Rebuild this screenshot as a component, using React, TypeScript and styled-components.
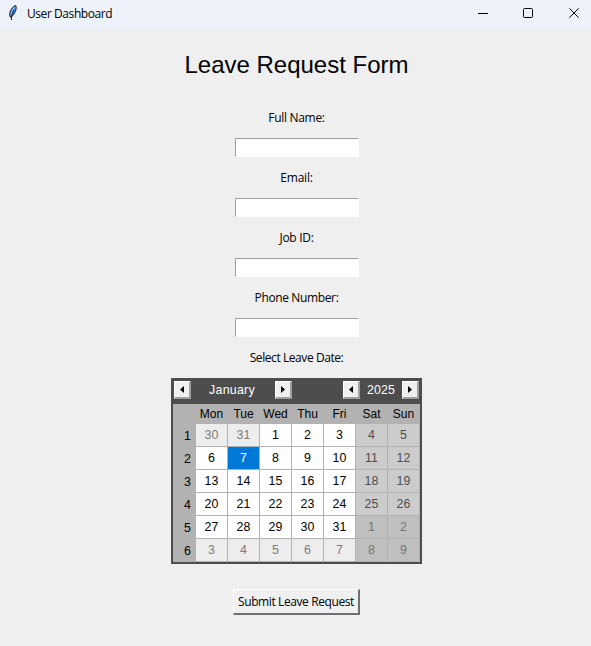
import React from "react";
import styled, { createGlobalStyle } from "styled-components";

const GlobalStyle = createGlobalStyle`
  * { box-sizing: border-box; }
  body { margin: 0; background: #efefef; overflow: hidden; }
`;

const UI_FONT = `"Open Sans", "Noto Sans", sans-serif`;
const CAL_FONT = `"Liberation Sans", Arial, sans-serif`;

const Window = styled.div`
  width: 591px;
  height: 646px;
  display: flex;
  flex-direction: column;
  background: #efefef;
  color: #000;
  font: 12px/16px ${UI_FONT};
`;

const TitleBar = styled.header`
  height: 29px;
  flex: none;
  display: flex;
  align-items: flex-start;
  background: #eef3fb;
`;

const AppIcon = styled.svg`
  width: 16px;
  height: 16px;
  margin: 5px 6px 0 5px;
`;

const WindowTitle = styled.span`
  flex: 1;
  padding-top: 6px;
  font-size: 12px;
  letter-spacing: -0.43px;
`;

const Controls = styled.div`
  display: flex;
  gap: 32px;
  padding: 7px 10px 0 0;
`;

const ControlIcon = styled.svg`
  width: 14px;
  height: 14px;
  fill: none;
  stroke: #000;
`;

const Body = styled.main`
  display: flex;
  flex-direction: column;
  align-items: center;
  padding-left: 2px;
`;

const Heading = styled.h1`
  margin: 18px 0 25px;
  font: 400 24px/36px ${CAL_FONT};
`;

const Field = styled.label`
  display: flex;
  flex-direction: column;
  align-items: center;
  height: 60px;
  padding-top: 2px;
`;

const Caption = styled.span<{ $tracking?: number }>`
  height: 28px;
  white-space: nowrap;
  letter-spacing: ${(p) => p.$tracking ?? -0.3}px;
`;

const Entry = styled.input`
  width: 124px;
  height: 19px;
  padding: 0 2px;
  border: 1px solid #fff;
  border-top-color: #a0a0a0;
  border-left-color: #a0a0a0;
  background: #fff;
  font: inherit;
  outline: none;
`;

const DateCaption = styled(Caption)`
  height: 30px;
  padding-top: 2px;
`;

const Calendar = styled.section`
  width: 251px;
  border: 2px solid #4d4d4d;
  border-top: 0;
  background: #4d4d4d;
  font-family: ${CAL_FONT};
`;

const CalendarHeader = styled.div`
  height: 26px;
  display: flex;
  align-items: center;
  justify-content: space-between;
  padding: 0 1px 2px;
  color: #fff;
  font-size: 12.4px;
  line-height: 15px;
  letter-spacing: 0.15px;
`;

const Stepper = styled.div<{ $width: number }>`
  width: ${(p) => p.$width}px;
  display: flex;
  align-items: center;
  justify-content: space-between;
`;

const MonthName = styled.span`
  padding-right: 2px;
  letter-spacing: 0.25px;
`;

const ArrowButton = styled.button`
  width: 17px;
  height: 18px;
  display: flex;
  align-items: center;
  justify-content: center;
  padding: 0;
  border: solid;
  border-width: 1px 2px 2px 1px;
  border-color: #fff #a0a0a0 #a0a0a0 #fff;
  background: #f0f0f0;
`;

const Grid = styled.div`
  display: grid;
  grid-template-columns: 23px repeat(7, 32px);
  grid-template-rows: 20px repeat(6, 23px);
  background: #b2b2b2;
  font-size: 12px;
`;

const Weekday = styled.span`
  padding-right: 1px;
  text-align: center;
  line-height: 20px;
`;

const WeekNumber = styled.span`
  padding: 1px 5px 0 0;
  text-align: right;
  font-size: 12.4px;
  line-height: 22px;
`;

type Kind = "normal" | "weekend" | "other" | "otherWeekend" | "selected";

const dayColors: Record<Kind, [string, string]> = {
  normal: ["#ffffff", "#000000"],
  weekend: ["#cccccc", "#4d4d4d"],
  other: ["#ededed", "#7b7b7b"],
  otherWeekend: ["#bfbfbf", "#757575"],
  selected: ["#0078d7", "#ffffff"],
};

const Day = styled.span<{ $kind: Kind }>`
  border: solid #b2b2b2;
  border-width: 0 1px 1px 0;
  background: ${(p) => dayColors[p.$kind][0]};
  color: ${(p) => dayColors[p.$kind][1]};
  text-align: center;
  font-size: 12.4px;
  line-height: 22px;
`;

const SubmitButton = styled.button`
  width: 127px;
  height: 26px;
  margin: 25px 1px 0 0;
  padding: 1px 0 0 1px;
  border: solid;
  border-width: 1px 2px 2px 1px;
  border-color: #fff #6f6f6f #6f6f6f #fff;
  background: #f0f0f0;
  color: #000;
  font: 12px/16px ${UI_FONT};
  letter-spacing: -0.4px;
  white-space: nowrap;
`;

const fields = [
  { label: "Full Name:" },
  { label: "Email:", tracking: -0.2 },
  { label: "Job ID:" },
  { label: "Phone Number:", tracking: -0.37 },
];

const weekdays = ["Mon", "Tue", "Wed", "Thu", "Fri", "Sat", "Sun"];

const weeks = Array.from({ length: 6 }, (_, w) =>
  Array.from({ length: 7 }, (_, d) => {
    const date = new Date(2024, 11, 30 + w * 7 + d);
    const outside = date.getMonth() !== 0;
    const weekend = d > 4;
    const day = date.getDate();
    let kind: Kind = "normal";
    if (outside) kind = weekend ? "otherWeekend" : "other";
    else if (weekend) kind = "weekend";
    else if (day === 7) kind = "selected";
    return { day, kind };
  })
);

function Arrow({ left = false }: { left?: boolean }) {
  return (
    <ArrowButton aria-label={left ? "Previous" : "Next"}>
      <svg width="4" height="7" viewBox="0 0 4 7">
        <path d={left ? "M4 0v7L0 3.5z" : "M0 0v7l4-3.5z"} fill="#000" />
      </svg>
    </ArrowButton>
  );
}

export default function App() {
  return (
    <>
      <GlobalStyle />
      <Window>
        <TitleBar>
          <AppIcon viewBox="0 0 16 16">
            <path
              d="M5.3 12.2C3.9 9.8 4.8 5.8 7 3.2 8.3 1.6 9.8.6 10.8.6c.9 1.6.3 5-1.2 7.7-1 1.7-2.4 3-4.3 3.9z"
              fill="#3f8ae0"
              stroke="#222a38"
              strokeWidth="1"
            />
            <path d="M9.6 2C7.6 4.2 6.3 7 5.9 9.6" stroke="#a9cdf3" strokeWidth="1.1" fill="none" />
            <path d="M8.8 5C7.4 7.5 6.5 11 6.4 15" stroke="#16191f" strokeWidth="1" fill="none" />
          </AppIcon>
          <WindowTitle>User Dashboard</WindowTitle>
          <Controls>
            <ControlIcon viewBox="0 0 14 14">
              <path d="M3 6.5h10" />
            </ControlIcon>
            <ControlIcon viewBox="0 0 14 14">
              <rect x="2.5" y="1.5" width="9" height="9" rx="1" />
            </ControlIcon>
            <ControlIcon viewBox="0 0 14 14">
              <path d="M2.3 1.3l9.4 9.4M11.7 1.3l-9.4 9.4" />
            </ControlIcon>
          </Controls>
        </TitleBar>
        <Body>
          <Heading>Leave Request Form</Heading>
          {fields.map((f) => (
            <Field key={f.label}>
              <Caption $tracking={f.tracking}>{f.label}</Caption>
              <Entry type="text" />
            </Field>
          ))}
          <DateCaption $tracking={-0.43}>Select Leave Date:</DateCaption>
          <Calendar>
            <CalendarHeader>
              <Stepper $width={118}>
                <Arrow left />
                <MonthName>January</MonthName>
                <Arrow />
              </Stepper>
              <Stepper $width={76}>
                <Arrow left />
                <span>2025</span>
                <Arrow />
              </Stepper>
            </CalendarHeader>
            <Grid>
              <span />
              {weekdays.map((d) => (
                <Weekday key={d}>{d}</Weekday>
              ))}
              {weeks.map((week, i) => (
                <React.Fragment key={i}>
                  <WeekNumber>{i + 1}</WeekNumber>
                  {week.map((d, j) => (
                    <Day key={j} $kind={d.kind}>
                      {d.day}
                    </Day>
                  ))}
                </React.Fragment>
              ))}
            </Grid>
          </Calendar>
          <SubmitButton>Submit Leave Request</SubmitButton>
        </Body>
      </Window>
    </>
  );
}
